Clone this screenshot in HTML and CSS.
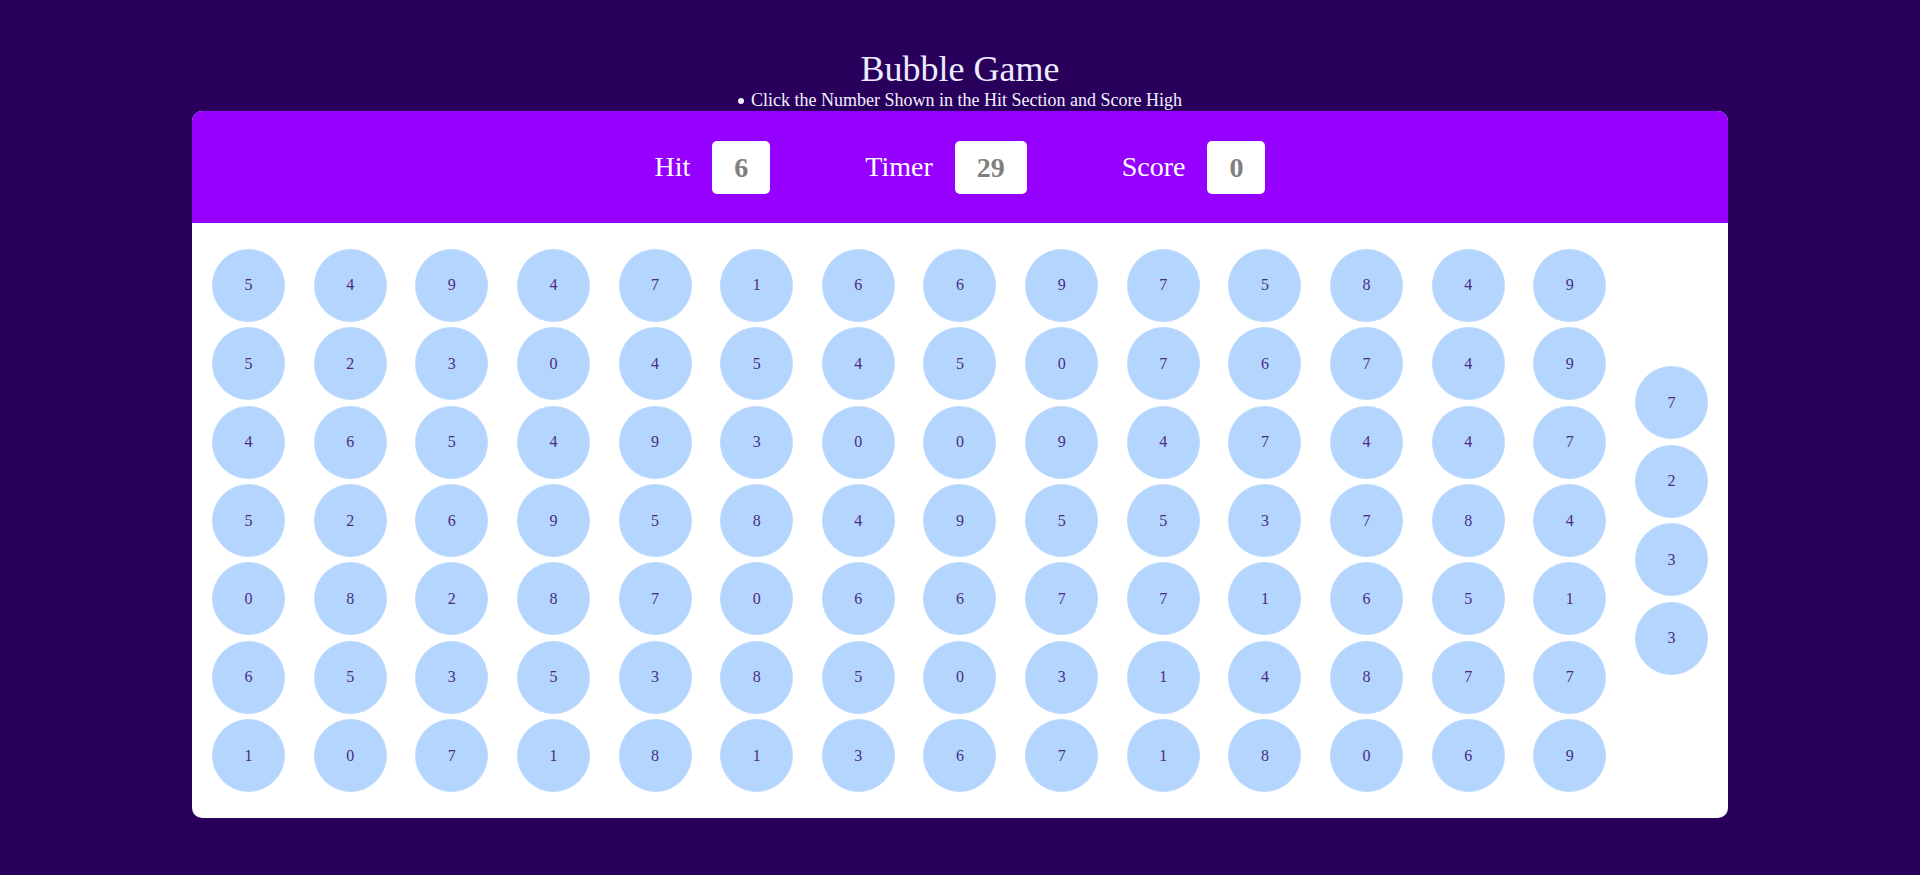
FILE: index.html
```html
<!DOCTYPE html>
<html lang="en">
<head>
<meta charset="utf-8">
<title>Bubble Game</title>
<link rel="stylesheet" href="styles.css">
</head>
<body>
<header class="intro">
  <h1 class="title">Bubble Game</h1>
  <ul class="subtitle"><li>Click the Number Shown in the Hit Section and Score High</li></ul>
</header>
<main class="panel">
  <div class="panel-top">
    <div class="stat"><span class="label">Hit</span><span class="box">6</span></div>
    <div class="stat"><span class="label">Timer</span><span class="box">29</span></div>
    <div class="stat"><span class="label">Score</span><span class="box">0</span></div>
  </div>
  <div class="panel-bottom">
    <div class="bubble">5</div><div class="bubble">5</div><div class="bubble">4</div><div class="bubble">5</div><div class="bubble">0</div><div class="bubble">6</div><div class="bubble">1</div>
    <div class="bubble">4</div><div class="bubble">2</div><div class="bubble">6</div><div class="bubble">2</div><div class="bubble">8</div><div class="bubble">5</div><div class="bubble">0</div>
    <div class="bubble">9</div><div class="bubble">3</div><div class="bubble">5</div><div class="bubble">6</div><div class="bubble">2</div><div class="bubble">3</div><div class="bubble">7</div>
    <div class="bubble">4</div><div class="bubble">0</div><div class="bubble">4</div><div class="bubble">9</div><div class="bubble">8</div><div class="bubble">5</div><div class="bubble">1</div>
    <div class="bubble">7</div><div class="bubble">4</div><div class="bubble">9</div><div class="bubble">5</div><div class="bubble">7</div><div class="bubble">3</div><div class="bubble">8</div>
    <div class="bubble">1</div><div class="bubble">5</div><div class="bubble">3</div><div class="bubble">8</div><div class="bubble">0</div><div class="bubble">8</div><div class="bubble">1</div>
    <div class="bubble">6</div><div class="bubble">4</div><div class="bubble">0</div><div class="bubble">4</div><div class="bubble">6</div><div class="bubble">5</div><div class="bubble">3</div>
    <div class="bubble">6</div><div class="bubble">5</div><div class="bubble">0</div><div class="bubble">9</div><div class="bubble">6</div><div class="bubble">0</div><div class="bubble">6</div>
    <div class="bubble">9</div><div class="bubble">0</div><div class="bubble">9</div><div class="bubble">5</div><div class="bubble">7</div><div class="bubble">3</div><div class="bubble">7</div>
    <div class="bubble">7</div><div class="bubble">7</div><div class="bubble">4</div><div class="bubble">5</div><div class="bubble">7</div><div class="bubble">1</div><div class="bubble">1</div>
    <div class="bubble">5</div><div class="bubble">6</div><div class="bubble">7</div><div class="bubble">3</div><div class="bubble">1</div><div class="bubble">4</div><div class="bubble">8</div>
    <div class="bubble">8</div><div class="bubble">7</div><div class="bubble">4</div><div class="bubble">7</div><div class="bubble">6</div><div class="bubble">8</div><div class="bubble">0</div>
    <div class="bubble">4</div><div class="bubble">4</div><div class="bubble">4</div><div class="bubble">8</div><div class="bubble">5</div><div class="bubble">7</div><div class="bubble">6</div>
    <div class="bubble">9</div><div class="bubble">9</div><div class="bubble">7</div><div class="bubble">4</div><div class="bubble">1</div><div class="bubble">7</div><div class="bubble">9</div>
    <div class="bubble">7</div><div class="bubble">2</div><div class="bubble">3</div><div class="bubble">3</div>
  </div>
</main>
</body>
</html>
```
FILE: styles.css
```css
* {
  box-sizing: border-box;
}

html, body {
  margin: 0;
  padding: 0;
}

body {
  background: #28005b;
  font-family: "Liberation Serif", "Times New Roman", serif;
  min-height: 875px;
}

.intro {
  padding-top: 49px;
  text-align: center;
  color: #ecebff;
}

.title {
  margin: 0;
  font-size: 36px;
  font-weight: normal;
  line-height: 41px;
}

.subtitle {
  margin: 0;
  padding: 0;
  list-style: none;
  font-size: 18px;
  line-height: 20px;
  color: #f2f0ff;
}

.subtitle li::before {
  content: "";
  display: inline-block;
  width: 6px;
  height: 6px;
  border-radius: 50%;
  background: #f2f0ff;
  margin-right: 7px;
  vertical-align: 2px;
}

.panel {
  width: 1536px;
  margin: 1px auto 0;
  background: #ffffff;
  border-radius: 10px;
  overflow: hidden;
}

.panel-top {
  height: 112px;
  background: #9600ff;
  display: flex;
  align-items: center;
  justify-content: center;
  gap: 95px;
}

.stat {
  display: flex;
  align-items: center;
  gap: 22px;
}

.label {
  color: #ffffff;
  font-size: 28px;
}

.box {
  background: #ffffff;
  color: #808080;
  font-size: 28px;
  font-weight: bold;
  line-height: 33px;
  padding: 10px 22px;
  border-radius: 5px;
}

.panel-bottom {
  height: 595px;
  padding: 0 20px;
  display: flex;
  flex-direction: column;
  flex-wrap: wrap;
  justify-content: center;
  align-content: space-between;
  row-gap: 5.4px;
}

.bubble {
  width: 73px;
  height: 73px;
  border-radius: 50%;
  background: #b4d5fe;
  border: 1px solid #bcdafe;
  color: #4b2c85;
  font-size: 16px;
  display: flex;
  align-items: center;
  justify-content: center;
}
```
